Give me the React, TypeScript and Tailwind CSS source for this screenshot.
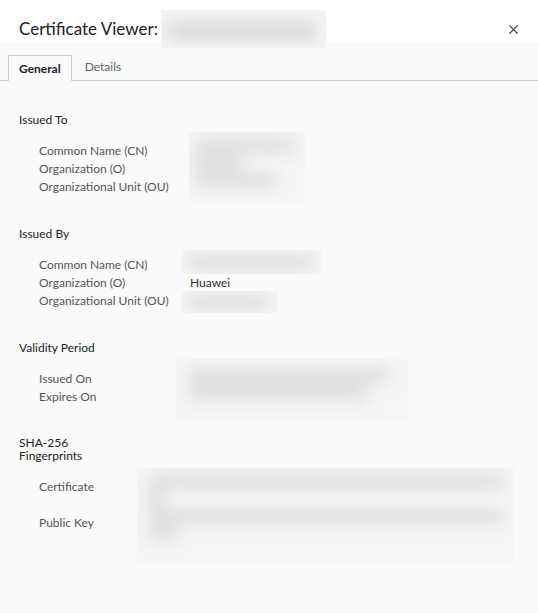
import { X } from "lucide-react";

// blurred placeholder for redacted values
function Blur({ className, bars }: { className: string; bars: string[] }) {
  return (
    <div className={`overflow-hidden bg-[#f6f6f6] ${className}`}>
      <div className="blur-[8px] flex flex-col gap-[5px] pt-[8px]">
        {bars.map((b, i) => (
          <div key={i} className={`h-[12px] bg-[#d6d6d6] ${b}`} />
        ))}
      </div>
    </div>
  );
}

export default function App() {
  return (
    <div
      className="w-[538px] h-[613px] bg-[#fafafa] text-[12px] text-[#222]"
      style={{ fontFamily: 'Lato, "Noto Sans", sans-serif' }}
    >
      {/* Header */}
      <div className="h-[42px] bg-white flex items-start pl-[19px] pr-[17px]">
        <div className="text-[17px] leading-[24px] mt-[17px] text-[#222] whitespace-nowrap">
          Certificate Viewer:
        </div>
        <Blur
          className="ml-[3px] mt-[10px] w-[165px] h-[38px] bg-[#f5f5f5]"
          bars={["h-[22px] mt-[2px] ml-[6px] w-[150px] bg-[#dadada]"]}
        />
        <button className="ml-auto mt-[22px] text-[#444]">
          <X size={15} strokeWidth={1.8} />
        </button>
      </div>

      {/* Tabs */}
      <div className="mt-[13px] flex items-end border-b border-[#cfcfcf] pl-[8px] h-[26px]">
        <div className="h-[26px] -mb-px px-[10px] border border-b-0 border-[#cfcfcf] bg-[#fafafa] font-bold leading-[26px]">
          General
        </div>
        <div className="h-[26px] px-[13px] text-[#666] leading-[26px]">Details</div>
      </div>

      <div className="pl-[19px] pt-[32px] whitespace-nowrap">
        {/* Issued To */}
        <div className="leading-[13px]">Issued To</div>
        <div className="flex items-start mt-[16px]">
          <div className="w-[170px] shrink-0 pl-[20px] text-[#555] leading-[18px]">
            <div>Common Name (CN)</div>
            <div>Organization (O)</div>
            <div>Organizational Unit (OU)</div>
          </div>
          <Blur
            className="-mt-[10px] -mb-[7px] w-[116px] h-[71px]"
            bars={["w-[100px] ml-[6px]", "w-[50px] ml-[4px]", "w-[80px] ml-[6px]"]}
          />
        </div>

        {/* Issued By */}
        <div className="leading-[13px] mt-[31px]">Issued By</div>
        <div className="flex items-start mt-[16px]">
          <div className="w-[171px] shrink-0 pl-[20px] text-[#555] leading-[18px]">
            <div>Common Name (CN)</div>
            <div>Organization (O)</div>
            <div>Organizational Unit (OU)</div>
          </div>
          <div className="leading-[18px] text-[#333]">
            <Blur
              className="-ml-[8px] -mt-[6px] w-[140px] h-[24px]"
              bars={["w-[125px] ml-[6px] h-[10px] -mt-[2px]"]}
            />
            <div>Huawei</div>
            <Blur
              className="-ml-[8px] -mt-[1px] -mb-[3px] w-[96px] h-[22px]"
              bars={["w-[80px] ml-[6px] h-[10px] -mt-[3px]"]}
            />
          </div>
        </div>

        {/* Validity Period */}
        <div className="leading-[13px] mt-[31px]">Validity Period</div>
        <div className="flex items-start mt-[16px]">
          <div className="w-[171px] shrink-0 pl-[20px] text-[#555] leading-[18px]">
            <div>Issued On</div>
            <div>Expires On</div>
          </div>
          <Blur
            className="-ml-[14px] -mt-[11px] -mb-[14px] w-[232px] h-[61px]"
            bars={["w-[200px] ml-[12px] mt-[2px]", "w-[180px] ml-[12px]"]}
          />
        </div>

        {/* Fingerprints */}
        <div className="leading-[13px] mt-[30px] w-[70px] whitespace-normal">SHA-256 Fingerprints</div>
        <div className="flex items-start mt-[16px]">
          <div className="w-[171px] shrink-0 pl-[20px] text-[#555] leading-[18px]">
            <div className="h-[36px]">Certificate</div>
            <div className="h-[36px]">Public Key</div>
          </div>
          <Blur
            className="-ml-[53px] -mt-[10px] -mb-[13px] w-[377px] h-[95px]"
            bars={[
              "w-[355px] ml-[12px]",
              "w-[20px] ml-[8px]",
              "w-[355px] ml-[12px]",
              "w-[30px] ml-[12px]",
            ]}
          />
        </div>
      </div>
    </div>
  );
}
